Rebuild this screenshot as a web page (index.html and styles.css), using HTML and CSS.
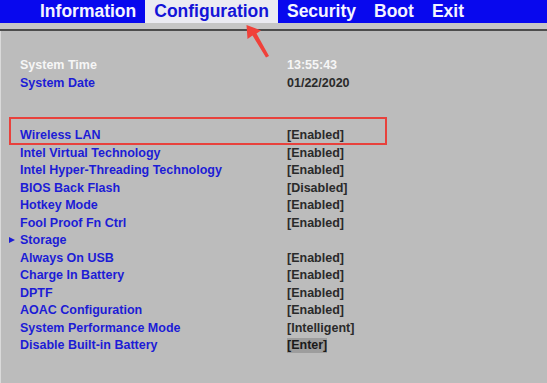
FILE: index.html
```html
<!DOCTYPE html>
<html lang="en">
  <head>
    <meta charset="UTF-8" />
    <meta name="viewport" content="width=device-width, initial-scale=1.0" />
    <title>BIOS Setup - Configuration</title>
    <link rel="stylesheet" href="styles.css">
  </head>
  <body>
    <div class="screen">
      <nav class="menu">
        <span class="tab">Information</span>
        <span class="tab active">Configuration</span>
        <span class="tab">Security</span>
        <span class="tab">Boot</span>
        <span class="tab">Exit</span>
      </nav>
      <div class="strip"></div>

      <main class="setup">
        <div class="row"><span class="label white">System Time</span><span class="value white">13:55:43</span></div>
        <div class="row"><span class="label">System Date</span><span class="value">01/22/2020</span></div>
        <div class="row empty"></div>
        <div class="row empty"></div>
        <div class="row"><span class="label">Wireless LAN</span><span class="value">[Enabled]</span></div>
        <div class="row"><span class="label">Intel Virtual Technology</span><span class="value">[Enabled]</span></div>
        <div class="row"><span class="label">Intel Hyper-Threading Technology</span><span class="value">[Enabled]</span></div>
        <div class="row"><span class="label">BIOS Back Flash</span><span class="value">[Disabled]</span></div>
        <div class="row"><span class="label">Hotkey Mode</span><span class="value">[Enabled]</span></div>
        <div class="row"><span class="label">Fool Proof Fn Ctrl</span><span class="value">[Enabled]</span></div>
        <div class="row"><span class="label sub">Storage</span><span class="value"></span></div>
        <div class="row"><span class="label">Always On USB</span><span class="value">[Enabled]</span></div>
        <div class="row"><span class="label">Charge In Battery</span><span class="value">[Enabled]</span></div>
        <div class="row"><span class="label">DPTF</span><span class="value">[Enabled]</span></div>
        <div class="row"><span class="label">AOAC Configuration</span><span class="value">[Enabled]</span></div>
        <div class="row"><span class="label">System Performance Mode</span><span class="value">[Intelligent]</span></div>
        <div class="row"><span class="label">Disable Built-in Battery</span><span class="value"><span class="selected">[Enter]</span></span></div>
      </main>

      <!-- annotation overlays -->
      <div class="mark"></div>
      <svg class="pointer" width="547" height="70" viewBox="0 0 547 70">
        <polygon points="246.5,25 261,30.5 256.5,33.5 269,56 266,57.5 252.5,35.5 247.5,39" fill="#f0413a" />
      </svg>
    </div>
  </body>
</html>
```

FILE: styles.css
```css
body {
    margin: 0;
    padding: 0;
    background-color: #bcbcbc;
    font-family: "Liberation Sans", Arial, sans-serif;
    overflow: hidden;
}

.screen {
    position: relative;
    width: 547px;
    height: 383px;
    background-color: #bcbcbc;
}

.menu {
    display: flex;
    height: 23px;
    padding-left: 31px;
    background-color: #0808ee;
}

.tab {
    padding: 0 9px;
    font-size: 17.5px;
    font-weight: bold;
    line-height: 23px;
    color: #f4f4ff;
}

.tab.active {
    background-color: #ebebf2;
    color: #1414d8;
}

.strip {
    height: 6px;
    background-color: #c6c6c6;
    border-bottom: 2px solid #4c4c4c;
}

.setup {
    padding-top: 26px;
    border-left: 1px solid #dadada;
    height: 326px;
}

.row {
    display: grid;
    grid-template-columns: 267px auto;
    padding-left: 19px;
    height: 17.5px;
    line-height: 17.5px;
}

.label {
    font-size: 12.5px;
    font-weight: bold;
    color: #1c1cd6;
}

.sub {
    position: relative;
}

.sub::before {
    content: "";
    position: absolute;
    left: -11px;
    top: 5px;
    border-left: 6px solid #1c1cd6;
    border-top: 3.5px solid transparent;
    border-bottom: 3.5px solid transparent;
}

.value {
    font-size: 12.5px;
    font-weight: bold;
    color: #2a2a2a;
}

.white {
    color: #f6f6f6;
}

.selected {
    display: inline-block;
    line-height: 15px;
    background-color: #9d9d9d;
    color: #1a1a1a;
}

.mark {
    position: absolute;
    left: 9px;
    top: 117px;
    width: 374px;
    height: 24px;
    border: 2px solid #e8413c;
}

.pointer {
    position: absolute;
    left: 0;
    top: 0;
}
```
